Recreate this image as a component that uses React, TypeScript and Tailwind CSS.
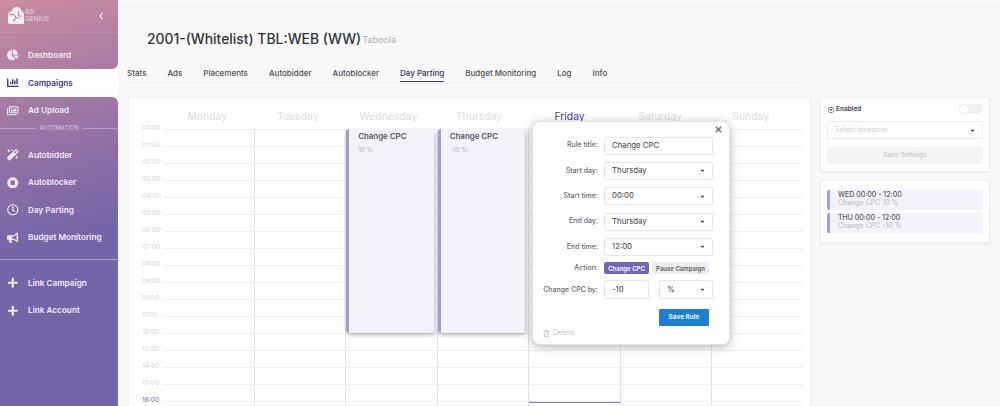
import type { ReactNode } from 'react';
import {
  FaBullhorn,
  FaCaretDown,
  FaChartBar,
  FaChartPie,
  FaChevronLeft,
  FaMagic,
  FaPlus,
  FaRegClock,
  FaRegDotCircle,
  FaRegImages,
  FaRegTrashAlt,
  FaStopCircle,
  FaTimes,
} from 'react-icons/fa';

const panelBg =
  'bg-[linear-gradient(165deg,#cb8c9f_0%,#a97ca4_22%,#8a6ea7_42%,#7464a8_60%,#7364a8_100%)] bg-fixed bg-size-[118px_406px] bg-no-repeat';

const tabs = ['Stats', 'Ads', 'Placements', 'Autobidder', 'Autoblocker', 'Day Parting', 'Budget Monitoring', 'Log', 'Info'];
const days = ['Monday', 'Tuesday', 'Wednesday', 'Thursday', 'Friday', 'Saturday', 'Sunday'];
const hours = Array.from({ length: 17 }, (_, i) => `${String(i).padStart(2, '0')}:00`);

function NavItem({ icon, label, active }: { icon: ReactNode; label: string; active?: boolean }) {
  return (
    <div className={`flex h-[27.5px] items-center pl-[3px] text-[8.2px] font-semibold ${active ? 'text-[#46388f]' : 'text-[#f1ecf6]'}`}>
      <span className={`flex w-[20px] justify-center text-[11.5px] ${active ? '' : 'text-[#efe9f5]'}`}>{icon}</span>
      <span className="ml-[5px]">{label}</span>
    </div>
  );
}

function Logo() {
  return (
    <div className="flex h-[33px] items-center justify-between border-b border-white/10 pb-[1px] pl-[8px] pr-[13px]">
      <div className="flex items-center gap-[1px]">
        <svg width="16" height="17" viewBox="0 0 16 17">
          <path d="M0 8c0-2 1.500-3.500 3.500-3.500C4 2 6 0 8.500 0 11 0 13 1.500 13.500 4 15 4.500 16 6 16 8v9H2c-1.200 0-2-.8-2-2z" fill="#f6f0f3" />
          <path d="M2.500 7.500h3l3 3.500h3M6 13.500l2-2.500M10.500 4v4l2.500 2" fill="none" stroke="#b98aa6" strokeWidth="1.100" />
          <circle cx="2.500" cy="7.500" r="1.100" fill="#b98aa6" />
          <circle cx="6" cy="13.500" r="1.100" fill="#b98aa6" />
        </svg>
        <div className="pt-[1px] text-[6.4px] leading-[7px] text-[#e9dbe6]">
          <div>AD</div>
          <div>GENIUS</div>
        </div>
      </div>
      <FaChevronLeft className="text-[8px] text-[#efe6ee]" />
    </div>
  );
}

function Sidebar() {
  return (
    <aside className="flex h-screen w-[118px] shrink-0 flex-col bg-white">
      <div className={`h-[69px] rounded-br-[6px] ${panelBg}`}>
        <Logo />
        <div className="pt-[8px]">
          <NavItem icon={<FaChartPie />} label="Dashboard" />
        </div>
      </div>
      <NavItem icon={<FaChartBar />} label="Campaigns" active />
      <div className={`flex-1 rounded-tr-[6px] ${panelBg}`}>
        <NavItem icon={<FaRegImages />} label="Ad Upload" />
        <div className="flex items-center gap-[3px] text-[5.6px] tracking-wide text-[#d9d0e6]">
          <div className="h-px flex-1 bg-white/30" />
          AUTOMATION
          <div className="h-px flex-1 bg-white/30" />
        </div>
        <div className="mt-[9px]">
          <NavItem icon={<FaMagic />} label="Autobidder" />
          <NavItem icon={<FaStopCircle />} label="Autoblocker" />
          <NavItem icon={<FaRegClock />} label="Day Parting" />
          <NavItem icon={<FaBullhorn />} label="Budget Monitoring" />
        </div>
        <div className="mt-[8px] h-px bg-white/40" />
        <div className="mt-[9px]">
          <NavItem icon={<FaPlus />} label="Link Campaign" />
          <NavItem icon={<FaPlus />} label="Link Account" />
        </div>
      </div>
    </aside>
  );
}

function EventCard({ value }: { value: string }) {
  return (
    <div className="h-[204px] w-[87.5px] rounded-[3px] border-l-[3px] border-[#a79bd6] bg-[#f3f2fb] pl-[9px] pt-[1px] shadow-[1px_2px_4px_rgba(0,0,0,0.28)]">
      <div className="text-[7.9px] font-semibold leading-[12px] text-[#55555f]">Change CPC</div>
      <div className="mt-[3px] text-[6.5px] leading-[10px] text-[#b5b5bb]">{value}</div>
    </div>
  );
}

function Calendar() {
  return (
    <section className="relative h-[330px] w-[683px] shrink-0 overflow-hidden border border-[#efefef] bg-white">
      <div className="ml-[33px] grid h-[31px] w-[634px] grid-cols-7 pt-[11px]">
        {days.map((d) => (
          <div key={d} className={`text-center text-[10.4px] leading-[15px] ${d === 'Friday' ? 'text-[#4b4095]' : 'text-[#dcdce0]'}`}>
            {d}
          </div>
        ))}
      </div>
      <div className="relative">
        {hours.map((h, i) => (
          <div key={h} className="flex h-[17px]">
            <div className={`-mt-[6px] w-[34px] pl-[13px] text-[6.7px] leading-[10px] ${i === 16 ? 'text-[#6f6a94]' : 'text-[#d4d4d8]'}`}>{h}</div>
            <div className="w-[641px] border-t border-[#f0f0f2]" />
          </div>
        ))}
        {/* day columns sit over the hour lines */}
        <div className="absolute left-[34px] top-0 grid h-full w-[641px] grid-cols-7">
          {days.map((d, i) => (
            <div key={d} className={`relative ${i < 6 ? 'border-r border-[#e3e3e6]' : ''}`}>
              {d === 'Wednesday' && <EventCard value="10 %" />}
              {d === 'Thursday' && <EventCard value="-10 %" />}
              {d === 'Friday' && <div className="absolute inset-x-0 top-[273px] h-px bg-[#8578bf]" />}
            </div>
          ))}
        </div>
      </div>
    </section>
  );
}

function Box({ value, select, className }: { value: string; select?: boolean; className: string }) {
  return (
    <div className={`flex items-center justify-between rounded-[2px] border border-[#e6e6e8] bg-white pl-[7px] pr-[6px] text-[7.8px] text-[#3c3c42] ${className}`}>
      {value}
      {select && <FaCaretDown className="text-[7px] text-[#444]" />}
    </div>
  );
}

function Field({ label, value, select }: { label: string; value: string; select?: boolean }) {
  return (
    <div className="flex h-[25.3px] items-center">
      <div className="w-[71px] pr-[6px] text-right text-[7px] font-medium text-[#6a6a70]">{label}</div>
      <Box value={value} select={select} className="h-[18px] w-[109px]" />
    </div>
  );
}

function RuleModal() {
  return (
    <div className="absolute left-[532px] top-[121px] h-[224px] w-[198px] rounded-[8px] border border-[#e4e4e4] bg-white shadow-[0_2px_10px_rgba(0,0,0,0.3)]">
      <FaTimes className="absolute right-[6px] top-[3px] text-[9px] text-[#7c7c80]" />
      <div className="pt-[11px]">
        <Field label="Rule title:" value="Change CPC" />
        <Field label="Start day:" value="Thursday" select />
        <Field label="Start time:" value="00:00" select />
        <Field label="End day:" value="Thursday" select />
        <Field label="End time:" value="12:00" select />
      </div>
      <div className="mt-[3px] flex h-[12px] items-center">
        <div className="w-[71px] pr-[6px] text-right text-[7px] font-medium text-[#6a6a70]">Action:</div>
        <div className="flex h-[12px] w-[45px] items-center justify-center rounded-[2px] bg-[#7464b8] text-[6px] font-semibold text-white">Change CPC</div>
        <div className="ml-[3px] flex h-[12px] w-[57px] items-center justify-center rounded-[2px] bg-[#eeeeee] text-[6px] font-semibold text-[#5a5a60]">Pause Campaign</div>
      </div>
      <div className="mt-[6px] flex h-[19px] items-center">
        <div className="w-[71px] pr-[6px] text-right text-[7px] font-medium whitespace-nowrap text-[#6a6a70]">Change CPC by:</div>
        <Box value="-10" className="h-[19px] w-[45px]" />
        <Box value="%" select className="ml-[10px] h-[19px] w-[54px]" />
      </div>
      <div className="mt-[10px] flex h-[17px] justify-end pr-[20px]">
        <div className="flex w-[50px] items-center justify-center rounded-[1px] bg-[#1d7fcf] text-[6.5px] font-semibold text-white">Save Rule</div>
      </div>
      <div className="mt-[2px] flex items-center gap-[3px] pl-[10px] text-[7px] text-[#c4c4c8]">
        <FaRegTrashAlt className="text-[7px]" />
        Delete
      </div>
    </div>
  );
}

function RuleItem({ title, sub }: { title: string; sub: string }) {
  return (
    <div className="mb-[3px] h-[20px] rounded-[2px] border-l-[3px] border-[#a79bd6] bg-[#f4f3fb] pl-[8px] pt-[1px] text-[7px] leading-[8px]">
      <div className="font-medium text-[#55555f]">{title}</div>
      <div className="text-[#b9b9c0]">{sub}</div>
    </div>
  );
}

function SidePanel() {
  return (
    <div className="ml-[9px] w-[170px] shrink-0">
      <div className="h-[75px] border border-[#efefef] bg-white px-[6px] pt-[6px] shadow-[0_1px_2px_rgba(0,0,0,0.08)]">
        <div className="flex h-[10px] items-center justify-between pl-[1px]">
          <div className="flex items-center gap-[2px] pt-[1px] text-[6.5px] font-semibold text-[#44444a]">
            <FaRegDotCircle className="text-[6px]" />
            Enabled
          </div>
          <div className="h-[10px] w-[24px] rounded-full bg-[#f1f1f1]">
            <div className="h-[10px] w-[10px] rounded-full border border-[#e8e8e8] bg-white" />
          </div>
        </div>
        <div className="mt-[7px] flex h-[18px] items-center justify-between border border-[#ececee] pl-[7px] pr-[6px] text-[6.9px] text-[#cfcfd3]">
          Select timezone:
          <FaCaretDown className="text-[7px] text-[#444]" />
        </div>
        <div className="mt-[8px] flex h-[17px] items-center justify-center bg-[#f4f4f4] text-[6.7px] font-medium text-[#c8c8cb]">Save Settings</div>
      </div>
      <div className="mt-[8px] h-[63px] border border-[#efefef] bg-white px-[6px] pt-[9px] shadow-[0_1px_2px_rgba(0,0,0,0.08)]">
        <RuleItem title="WED 00:00 - 12:00" sub="Change CPC 10 %" />
        <RuleItem title="THU 00:00 - 12:00" sub="Change CPC -10 %" />
      </div>
    </div>
  );
}

export default function App() {
  return (
    <div className="relative flex h-screen overflow-hidden bg-[#f9f9f9] font-['Inter',sans-serif]">
      <Sidebar />
      <main className="flex-1">
        <div className="mt-[6px] h-px bg-[#f1f1f1]" />
        <div className="flex h-[44px] items-center pl-[29px] pt-[19px]">
          <h1 className="text-[13.9px] leading-[20px] font-medium text-[#33333a]">2001-(Whitelist) TBL:WEB (WW)</h1>
          <span className="ml-[1px] mt-[3px] text-[9px] text-[#a9a9ad]">Taboola</span>
        </div>
        <nav className="ml-[9px] mt-[11px] flex h-[21px] w-[678px] gap-[21px] border-b border-[#f0f0f0] text-[8px] leading-[12px] font-medium text-[#4d4d55]">
          {tabs.map((t) => (
            <div key={t} className={`pt-[5px] ${t === 'Day Parting' ? 'border-b border-[#46388f] text-[#38344f]' : ''}`}>{t}</div>
          ))}
        </nav>
        <div className="ml-[10px] mt-[14px] flex">
          <Calendar />
          <SidePanel />
        </div>
      </main>
      <RuleModal />
    </div>
  );
}
